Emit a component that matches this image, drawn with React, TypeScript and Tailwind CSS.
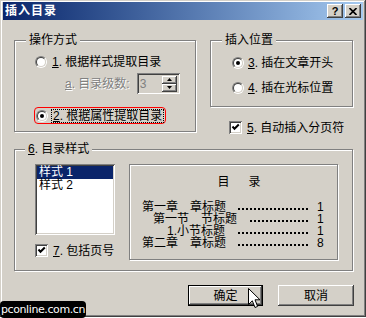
import React from 'react';

const raised =
  'shadow-[inset_-1px_-1px_0_#404040,inset_1px_1px_0_#ffffff,inset_-2px_-2px_0_#808080,inset_2px_2px_0_#d4d0c8]';
const sunken =
  'shadow-[inset_1px_1px_0_#808080,inset_-1px_-1px_0_#ffffff,inset_2px_2px_0_#404040,inset_-2px_-2px_0_#d4d0c8]';
const etched = 'border border-[#808080] shadow-[1px_1px_0_#ffffff,inset_1px_1px_0_#ffffff]';

const Radio: React.FC<{ checked?: boolean }> = ({ checked }) => (
  <span className="inline-block w-[12px] h-[12px] shrink-0 rounded-full border border-t-[#808080] border-l-[#808080] border-r-white border-b-white">
    <span className="flex w-full h-full items-center justify-center rounded-full border border-t-[#404040] border-l-[#404040] border-r-[#d4d0c8] border-b-[#d4d0c8] bg-white">
      {checked && <span className="w-[4px] h-[4px] rounded-full bg-black" />}
    </span>
  </span>
);

const Check: React.FC = () => (
  <span className={`inline-flex w-[13px] h-[13px] shrink-0 bg-white items-center justify-center ${sunken}`}>
    <svg width="13" height="13" viewBox="0 0 13 13">
      <path d="M3.5 5.5 L5.5 7.8 L9.8 3.5" stroke="#000" strokeWidth="2" fill="none" />
    </svg>
  </span>
);

const Dots: React.FC<{ short?: boolean }> = ({ short }) => (
  <span className={`self-end mb-[3px] h-[2px] border-t-2 border-dotted border-black ${short ? 'w-[58px]' : 'w-[70px]'}`} />
);

export default function App() {
  return (
    <div className="relative w-[366px] h-[318px] bg-white [font-family:'Liberation_Sans','Noto_Sans_CJK_SC',sans-serif] text-[12px] text-black">
      <div className="w-[366px] h-[317px] bg-[#d4d0c8] pt-[2px] px-[3px] shadow-[inset_-1px_-1px_0_#404040,inset_1px_1px_0_#d4d0c8,inset_-2px_-2px_0_#808080,inset_2px_2px_0_#ffffff]">
        {/* title bar */}
        <div className="h-[18px] flex items-center justify-between pl-[2px] pr-[2px] bg-gradient-to-r from-[#0a246a] to-[#a6caf0]">
          <span className="text-white font-bold text-[12px] leading-[14px] tracking-[1px]">插入目录</span>
          <div className="flex gap-[2px]">
            <span className={`w-[16px] h-[14px] bg-[#d4d0c8] flex items-center justify-center font-bold text-[11px] leading-[11px] ${raised}`}>?</span>
            <span className={`w-[16px] h-[14px] bg-[#d4d0c8] flex items-center justify-center ${raised}`}>
              <svg width="8" height="7" viewBox="0 0 8 7">
                <path d="M0.5 0 L7.5 7 M7.5 0 L0.5 7" stroke="#000" strokeWidth="1.6" />
              </svg>
            </span>
          </div>
        </div>

        {/* top row */}
        <div className="flex mt-[20px] pl-[11px]">
          <div className={`relative w-[182px] h-[92px] ${etched} pl-[20px] pt-[14px] flex flex-col`}>
            <span className="absolute left-[11px] -top-[9px] px-[3px] bg-[#d4d0c8] leading-[16px]">操作方式</span>
            <div className="flex items-center h-[14px] gap-[5px]">
              <Radio />
              <span className="leading-[14px] whitespace-nowrap">
                <span className="underline">1</span>. 根据样式提取目录
              </span>
            </div>
            <div className="flex items-center h-[21px] mt-[4px] pl-[30px]">
              <span className="text-[#808080] [text-shadow:1px_1px_0_#ffffff] leading-[14px] whitespace-nowrap">
                <span className="underline">a</span>. 目录级数:
              </span>
              <div className={`ml-[7px] w-[43px] h-[21px] flex items-center justify-between px-[3px] bg-[#d4d0c8] ${sunken}`}>
                <span className="text-[#808080] leading-[14px]">3</span>
                <div className="flex flex-col">
                  <span className={`w-[15px] h-[8px] bg-[#d4d0c8] flex items-center justify-center ${raised}`}>
                    <svg width="5" height="3" viewBox="0 0 5 3"><path d="M2.5 0 L5 3 L0 3 Z" fill="#000" /></svg>
                  </span>
                  <span className={`w-[15px] h-[8px] bg-[#d4d0c8] flex items-center justify-center ${raised}`}>
                    <svg width="5" height="3" viewBox="0 0 5 3"><path d="M0 0 L5 0 L2.5 3 Z" fill="#000" /></svg>
                  </span>
                </div>
              </div>
            </div>
            <div className="mt-[13px] -ml-[1px] self-start h-[17px] flex items-center gap-[3px] pl-[1px] pr-[1px] border border-[#ff0000] rounded-[4px] whitespace-nowrap">
              <Radio checked />
              <span className="leading-[12px] border border-dotted border-black px-[1px] whitespace-nowrap">
                <span className="underline">2</span>. 根据属性提取目录
              </span>
            </div>
          </div>

          <div className="ml-[14px] flex flex-col">
            <div className={`relative w-[143px] h-[67px] ${etched} pl-[21px] pt-[15px] flex flex-col`}>
              <span className="absolute left-[11px] -top-[9px] px-[3px] bg-[#d4d0c8] leading-[16px]">插入位置</span>
              <div className="flex items-center h-[14px] gap-[4px]">
                <Radio checked />
                <span className="leading-[14px] whitespace-nowrap">
                  <span className="underline">3</span>. 插在文章开头
                </span>
              </div>
              <div className="flex items-center h-[14px] gap-[4px] mt-[11px]">
                <Radio />
                <span className="leading-[14px] whitespace-nowrap">
                  <span className="underline">4</span>. 插在光标位置
                </span>
              </div>
            </div>
            <div className="flex items-center mt-[14px] ml-[19px] gap-[5px] h-[13px]">
              <Check />
              <span className="leading-[14px] whitespace-nowrap">
                <span className="underline">5</span>. 自动插入分页符
              </span>
            </div>
          </div>
        </div>

        {/* style group */}
        <div className={`relative ml-[11px] mt-[15px] w-[339px] h-[122px] ${etched} pl-[20px] pt-[14px] flex items-start`}>
          <span className="absolute left-[10px] -top-[9px] px-[3px] bg-[#d4d0c8] leading-[16px]">
            <span className="underline">6</span>. 目录样式
          </span>
          <div className="flex flex-col">
            <div className={`w-[80px] h-[71px] bg-white p-[2px] flex flex-col ${sunken}`}>
              <span className="h-[13px] bg-[#0a246a] text-white leading-[13px] pl-[2px]">样式 1</span>
              <span className="h-[13px] leading-[13px] pl-[2px]">样式 2</span>
            </div>
            <div className="flex items-center mt-[9px] gap-[5px] h-[13px]">
              <Check />
              <span className="leading-[14px] whitespace-nowrap">
                <span className="underline">7</span>. 包括页号
              </span>
            </div>
          </div>
          <div className={`ml-[14px] w-[209px] h-[96px] ${etched} pt-[10px] flex flex-col`}>
            <div className="flex justify-center gap-[19px] pl-[11px] leading-[14px]">
              <span>目</span>
              <span>录</span>
            </div>
            <div className="mt-[12px] flex flex-col leading-[12px]">
              <div className="flex h-[12px]">
                <span className="w-[108px] pl-[12px] whitespace-nowrap">第一章　章标题</span>
                <Dots />
                <span className="ml-[9px]">1</span>
              </div>
              <div className="flex h-[12px]">
                <span className="w-[120px] pl-[23px] whitespace-nowrap">第一节　节标题</span>
                <Dots short />
                <span className="ml-[9px]">1</span>
              </div>
              <div className="flex h-[12px]">
                <span className="w-[108px] pl-[37px] whitespace-nowrap">1.小节标题</span>
                <Dots />
                <span className="ml-[9px]">1</span>
              </div>
              <div className="flex h-[12px]">
                <span className="w-[108px] pl-[12px] whitespace-nowrap">第二章　章标题</span>
                <Dots />
                <span className="ml-[9px]">8</span>
              </div>
            </div>
          </div>
        </div>

        {/* buttons */}
        <div className="flex mt-[14px] pl-[185px] gap-[15px]">
          <span className="w-[75px] h-[21px] border border-black">
            <span className={`w-full h-full flex items-center justify-center bg-[#d4d0c8] leading-[14px] ${raised}`}>确定</span>
          </span>
          <span className={`w-[76px] h-[21px] flex items-center justify-center bg-[#d4d0c8] leading-[14px] ${raised}`}>取消</span>
        </div>
      </div>

      {/* mouse cursor */}
      <svg className="absolute left-[248px] top-[288px]" width="13" height="21" viewBox="0 0 13 21">
        <path d="M0.5 0.5 L0.5 16.5 L4.3 12.8 L7 19.5 L9.6 18.4 L7 11.8 L12 11.8 Z" fill="#fff" stroke="#000" strokeWidth="1" />
      </svg>

      {/* watermark */}
      <span className="absolute left-0 bottom-0 h-[17px] w-[86px] flex items-center justify-center rounded-[4px] bg-black text-white text-[11px] leading-[12px] [font-family:'DejaVu_Sans',sans-serif] tracking-[-0.4px]">
        pconline.com.cn
      </span>
    </div>
  );
}
